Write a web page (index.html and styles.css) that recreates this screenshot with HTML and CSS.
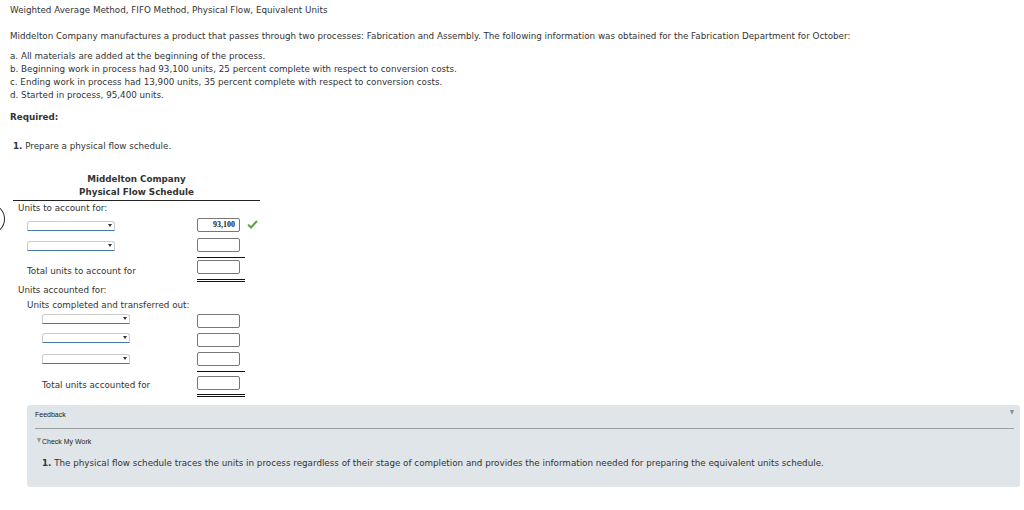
FILE: index.html
```html
<!DOCTYPE html>
<html>
<head>
<meta charset="utf-8">
<link rel="stylesheet" href="styles.css">
</head>
<body>
<div class="ring"></div>
<div class="page">
  <div class="title">Weighted Average Method, FIFO Method, Physical Flow, Equivalent Units</div>
  <p class="intro">Middelton Company manufactures a product that passes through two processes: Fabrication and Assembly. The following information was obtained for the Fabrication Department for October:</p>
  <ul class="facts">
    <li>a. All materials are added at the beginning of the process.</li>
    <li>b. Beginning work in process had 93,100 units, 25 percent complete with respect to conversion costs.</li>
    <li>c. Ending work in process had 13,900 units, 35 percent complete with respect to conversion costs.</li>
    <li>d. Started in process, 95,400 units.</li>
  </ul>
  <div class="required">Required:</div>
  <div class="task"><b>1.</b> Prepare a physical flow schedule.</div>

  <div class="schedule">
    <div class="sch-head">
      <div>Middelton Company</div>
      <div>Physical Flow Schedule</div>
    </div>
    <div class="row r0"><span class="lbl ind0">Units to account for:</span></div>
    <div class="row r1">
      <span class="lbl ind1"><span class="dd"></span></span>
      <span class="amt"><span class="box filled">93,100</span></span>
      <span class="check"><svg width="11" height="9" viewBox="0 0 11 9"><path d="M1 4.6 L4 7.5 L10 1" fill="none" stroke="#5aa04a" stroke-width="2"/></svg></span>
    </div>
    <div class="row r2">
      <span class="lbl ind1"><span class="dd"></span></span>
      <span class="amt single"><span class="box"></span></span>
    </div>
    <div class="row r3">
      <span class="lbl ind1 t">Total units to account for</span>
      <span class="amt double"><span class="box"></span></span>
    </div>
    <div class="row r4"><span class="lbl ind0">Units accounted for:</span></div>
    <div class="row r5"><span class="lbl ind1">Units completed and transferred out:</span></div>
    <div class="row r6">
      <span class="lbl ind2"><span class="dd"></span></span>
      <span class="amt"><span class="box"></span></span>
    </div>
    <div class="row r7">
      <span class="lbl ind2"><span class="dd"></span></span>
      <span class="amt"><span class="box"></span></span>
    </div>
    <div class="row r8">
      <span class="lbl ind2"><span class="dd"></span></span>
      <span class="amt single"><span class="box"></span></span>
    </div>
    <div class="row r9">
      <span class="lbl ind2 t">Total units accounted for</span>
      <span class="amt double"><span class="box"></span></span>
    </div>
  </div>

  <div class="feedback">
    <div class="fb-head">
      <span>Feedback</span>
      <span class="fb-tri"></span>
    </div>
    <div class="fb-check"><span class="tri-s"></span>Check My Work</div>
    <div class="fb-text"><b>1.</b> The physical flow schedule traces the units in process regardless of their stage of completion and provides the information needed for preparing the equivalent units schedule.</div>
  </div>
</div>
</body>
</html>
```

FILE: styles.css
```css
html, body {
  margin: 0;
  padding: 0;
  background: #fff;
}
body {
  font-family: "DejaVu Sans", Verdana, sans-serif;
  font-size: 8.75px;
  color: #333;
  overflow: hidden;
  height: 510px;
  position: relative;
}
.page {
  padding: 4px 10px 0 10px;
}
.title {
  line-height: 13px;
}
.intro {
  margin: 13px 0 0 0;
  line-height: 13px;
}
.facts {
  list-style: none;
  margin: 7px 0 0 0;
  padding: 0;
}
.facts li {
  line-height: 13px;
}
.required {
  font-weight: bold;
  margin-top: 9px;
  line-height: 13px;
}
.task {
  margin: 16px 0 0 3px;
  line-height: 13px;
}
.schedule {
  margin: 20px 0 0 3px;
  width: 247px;
}
.sch-head {
  font-weight: bold;
  text-align: center;
  line-height: 13px;
  border-bottom: 1px solid #222;
  padding-bottom: 1px;
}
.row {
  display: flex;
  align-items: flex-start;
}
.lbl {
  flex: none;
  display: flex;
  align-items: flex-start;
  box-sizing: border-box;
  width: 184px;
  line-height: 13px;
}
.ind0 { padding-left: 5px; }
.ind1 { padding-left: 14px; }
.ind2 { padding-left: 29px; }
.amt {
  width: 48px;
  flex: none;
  height: 100%;
  box-sizing: border-box;
}
.amt.single { border-bottom: 1px solid #111; }
.amt.double { border-bottom: 3px double #111; }

.r0 { height: 14px; }
.r0 .lbl { line-height: 14px; }
.r1 { height: 20px; }
.r1 .lbl { padding-top: 6px; }
.r1 .amt { padding-top: 3px; }
.r2 { height: 23px; }
.r2 .lbl { padding-top: 6px; }
.r2 .amt { padding-top: 3px; }
.r3 { height: 24px; }
.r3 .lbl { padding-top: 7px; }
.r3 .amt { padding-top: 2px; }
.r4 { height: 16px; }
.r4 .lbl { line-height: 16px; }
.r5 { height: 14px; }
.r5 .lbl { line-height: 14px; }
.r6 { height: 19px; }
.r6 .lbl { padding-top: 2px; }
.r6 .amt { padding-top: 2px; }
.r7 { height: 19px; }
.r7 .lbl { padding-top: 2px; }
.r7 .amt { padding-top: 2px; }
.r8 { height: 22px; }
.r8 .lbl { padding-top: 4px; }
.r8 .amt { padding-top: 2px; }
.r9 { height: 25px; }
.r9 .lbl { padding-top: 7px; }
.r9 .amt { padding-top: 4px; }

.box {
  display: block;
  width: 43px;
  height: 14px;
  box-sizing: border-box;
  border: 1px solid #777;
  border-radius: 2px;
  background: #fff;
  font-family: "Liberation Serif", "Times New Roman", serif;
  font-size: 8px;
  font-weight: bold;
  text-align: right;
  line-height: 12px;
  padding-right: 4px;
  color: #222;
}
.check {
  margin-left: 2px;
  padding-top: 5px;
  display: flex;
}
.dd {
  display: block;
  width: 88px;
  height: 10px;
  box-sizing: border-box;
  border: 1px solid #ccc;
  border-bottom: 1px solid #4a78a8;
  border-radius: 3px 3px 0 0;
  position: relative;
  background: #fff;
}
.dd::after {
  content: "";
  position: absolute;
  right: 2px;
  top: 2px;
  border-left: 2.5px solid transparent;
  border-right: 2.5px solid transparent;
  border-top: 3px solid #333;
}
.ring {
  position: absolute;
  left: -24px;
  top: 204px;
  width: 27px;
  height: 28px;
  border: 1.5px solid #222;
  border-radius: 50%;
}
.feedback {
  margin: 8px -6px 0 17px;
  background: #dfe5e8;
  border-radius: 3px;
  height: 82px;
  padding: 0 6px 0 8px;
  font-family: "Liberation Sans", Arial, sans-serif;
  box-sizing: border-box;
}
.fb-head {
  display: flex;
  justify-content: space-between;
  align-items: flex-start;
  font-size: 7px;
  line-height: 20px;
  color: #222;
  height: 24px;
  border-bottom: 1px solid #9a9fa2;
  box-sizing: border-box;
}
.fb-tri {
  width: 0;
  height: 0;
  border-left: 2.5px solid transparent;
  border-right: 2.5px solid transparent;
  border-top: 5px solid #8a8f93;
  margin-top: 5px;
}
.fb-check {
  font-size: 7px;
  color: #222;
  margin-top: 8px;
  display: flex;
  align-items: center;
  line-height: 9px;
}
.tri-s {
  display: inline-block;
  width: 0;
  height: 0;
  border-left: 2px solid transparent;
  border-right: 2px solid transparent;
  border-top: 5px solid #999;
  margin: 0 1px 2px 2px;
}
.fb-text {
  font-family: "DejaVu Sans", Verdana, sans-serif;
  font-size: 8.75px;
  color: #333;
  margin: 12px 0 0 7px;
  line-height: 10px;
}
```
